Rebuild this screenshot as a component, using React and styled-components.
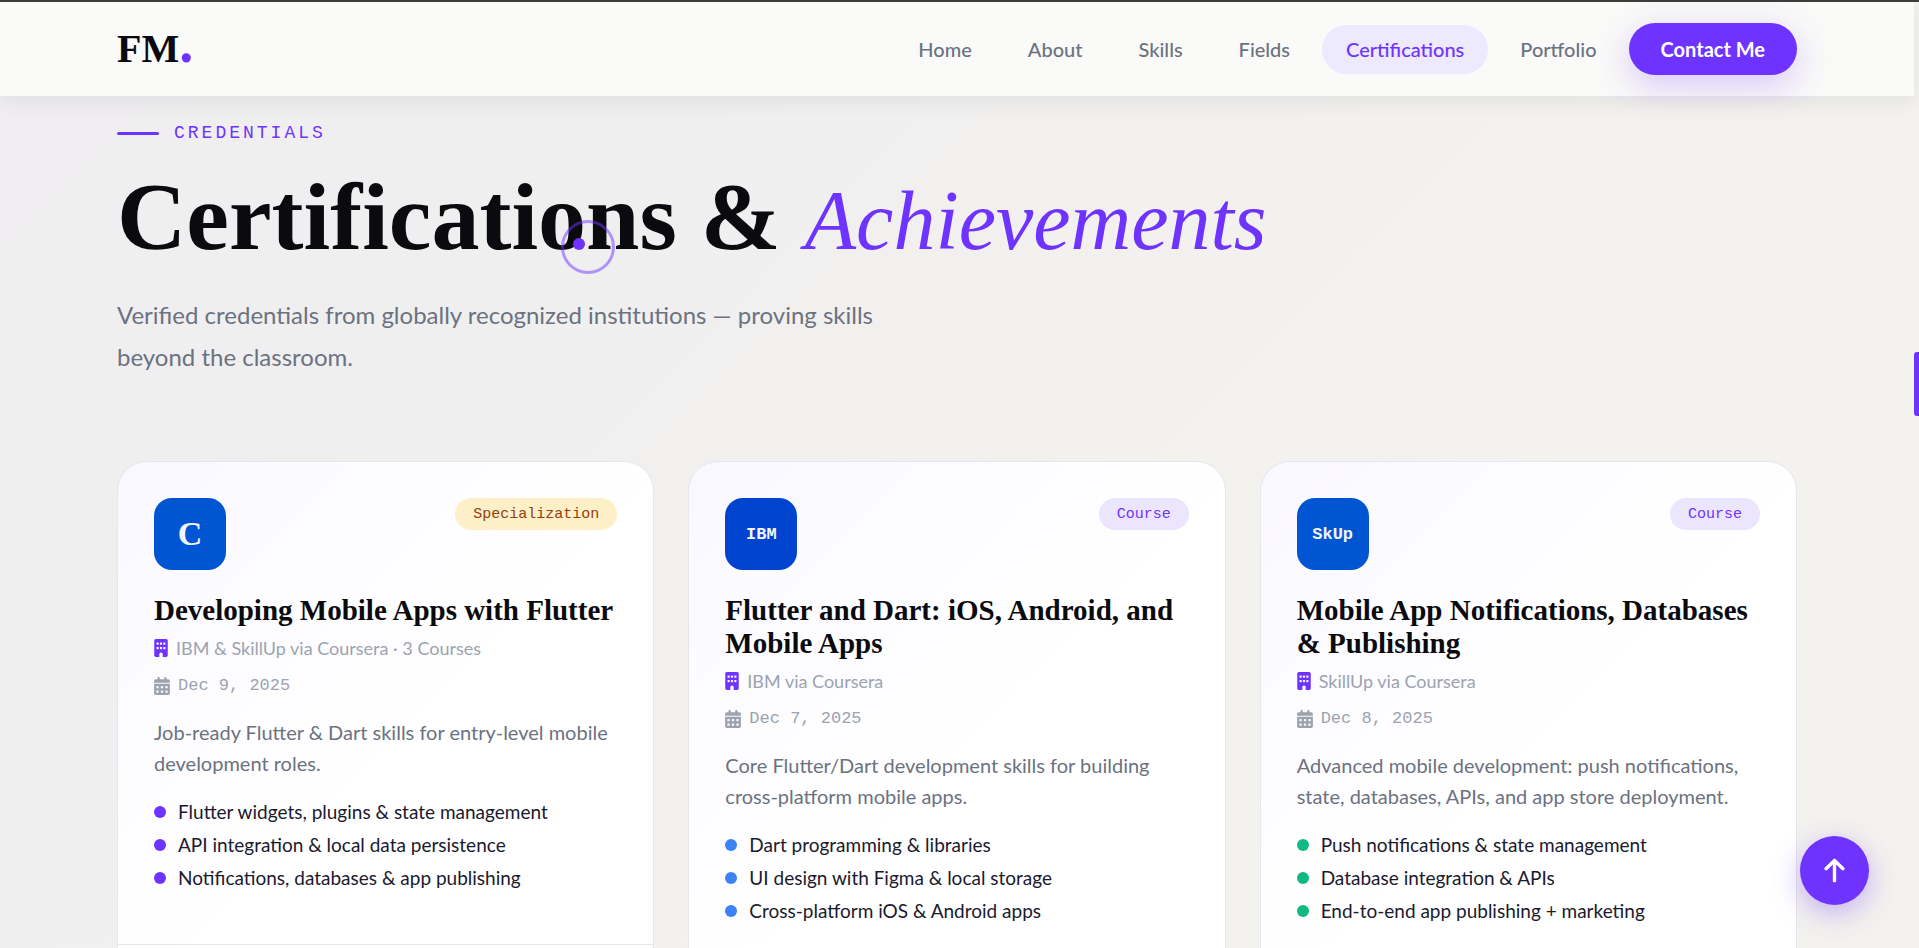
import React from 'react';
import styled, { createGlobalStyle } from 'styled-components';
import { FaArrowUp, FaBuilding, FaCalendarDays } from 'react-icons/fa6';

const sans = `Lato, 'Open Sans', sans-serif`;
const serif = `'Liberation Serif', serif`;
const mono = `'Liberation Mono', monospace`;

const GlobalStyle = createGlobalStyle`
  * {
    box-sizing: border-box;
    margin: 0;
    padding: 0;
  }

  body {
    height: 100vh;
    overflow: hidden;
    background: linear-gradient(135deg, #f0eef0 0%, #f0eff0 25%, #f3f2ee 65%, #f3f2ee 100%);
    font-family: ${sans};
    color: #0a0a0f;
  }
`;

const Header = styled.header`
  position: relative;
  z-index: 2;
  margin-right: 5px;
  border-bottom: 1px solid #e5e7eb;
  background: #fafaf8;
  box-shadow: 0 4px 20px rgba(0, 0, 0, 0.07);
`;

const TopEdge = styled.div`
  height: 2px;
  background: #403e3d;
`;

const Container = styled.div`
  max-width: 1760px;
  margin: 0 auto;
  padding: 0 40px;
`;

const HeaderRow = styled(Container)`
  display: flex;
  align-items: center;
  justify-content: space-between;
  height: 94px;
`;

const Logo = styled.a`
  font-family: ${serif};
  font-size: 40px;
  font-weight: 700;
  line-height: 46px;
  color: #0a0a0f;
  text-decoration: none;
`;

const LogoDot = styled.span`
  font-size: 56px;
  line-height: 0;
  color: #6e33ff;
`;

const Nav = styled.nav`
  display: flex;
  align-items: center;
  gap: 8px;
`;

const NavLink = styled.a`
  padding: 0 24px;
  border-radius: 25px;
  font-size: 20px;
  font-weight: 500;
  line-height: 49px;
  text-decoration: none;
  color: ${(props) => (props.$active ? '#6e33ff' : '#6b7280')};
  background: ${(props) => (props.$active ? '#ede9fe' : 'transparent')};
`;

const ContactButton = styled.button`
  padding: 0 32px;
  border: 0;
  border-radius: 26px;
  background: #6e33ff;
  box-shadow: 0 10px 36px rgba(110, 51, 255, 0.25);
  font-family: ${sans};
  font-size: 20px;
  font-weight: 700;
  line-height: 52px;
  color: #fff;
`;

const Section = styled.section`
  margin-right: 5px;
  padding-top: 23px;
`;

const Eyebrow = styled.p`
  display: flex;
  align-items: center;
  gap: 15px;
  margin-bottom: 18px;
  font-family: ${mono};
  font-size: 18px;
  line-height: 26px;
  letter-spacing: 3px;
  text-transform: uppercase;
  color: #6e33ff;

  &::before {
    content: '';
    width: 42px;
    height: 3px;
    border-radius: 2px;
    background: #6e33ff;
  }
`;

const Title = styled.h1`
  font-family: ${serif};
  font-size: 96px;
  font-weight: 700;
  line-height: 106px;
`;

const TitleAccent = styled.em`
  font-size: 84px;
  font-weight: 400;
  line-height: 1;
  color: #6e33ff;
`;

const Subtitle = styled.p`
  max-width: 780px;
  margin: 24px 0 83px;
  font-size: 24px;
  line-height: 42px;
  color: #6b7280;
`;

const CardGrid = styled.div`
  display: grid;
  grid-template-columns: repeat(3, 1fr);
  gap: 34px;
`;

const Card = styled.article`
  border: 1px solid #e5e7eb;
  border-radius: 30px;
  background: linear-gradient(135deg, #faf8ff 0%, #fff 50%);
`;

const CardBody = styled.div`
  padding: 36px;
`;

const CardTop = styled.div`
  display: flex;
  align-items: flex-start;
  justify-content: space-between;
  margin-bottom: 24px;
`;

const Issuer = styled.div`
  display: flex;
  align-items: center;
  justify-content: center;
  width: 72px;
  height: 72px;
  border-radius: 18px;
  background: ${(props) => props.$color};
  font-family: ${(props) => (props.$serif ? serif : mono)};
  font-size: ${(props) => (props.$serif ? 34 : 17)}px;
  font-weight: 700;
  color: #f2f5fd;
`;

const Badge = styled.span`
  padding: 2px 18px 0;
  border-radius: 16px;
  background: ${(props) => (props.$gold ? '#fdf0c8' : '#ebe6fe')};
  font-family: ${mono};
  font-size: 15px;
  font-weight: 500;
  line-height: 30px;
  color: ${(props) => (props.$gold ? '#92400e' : '#6e33ff')};
`;

const CardTitle = styled.h2`
  margin-bottom: 8px;
  font-family: ${serif};
  font-size: 29px;
  font-weight: 700;
  line-height: 33px;
`;

const MetaRow = styled.p`
  display: flex;
  align-items: center;
  gap: 8px;
  margin-bottom: 12px;
  font-size: 18px;
  line-height: 26px;
  color: #9ca3af;
`;

const DateRow = styled(MetaRow)`
  margin-bottom: 18px;
  font-family: ${mono};
  font-size: 17px;
`;

const BuildingIcon = styled(FaBuilding)`
  width: 14px;
  height: 18px;
  color: #6e33ff;
`;

const CalendarIcon = styled(FaCalendarDays)`
  width: 16px;
  height: 18px;
`;

const Description = styled.p`
  margin-bottom: 20px;
  font-size: 20px;
  line-height: 31px;
  color: #6b7280;
`;

const SkillList = styled.ul`
  display: flex;
  flex-direction: column;
  gap: 8px;
  margin-bottom: 18px;
  list-style: none;
`;

const Skill = styled.li`
  display: flex;
  align-items: center;
  gap: 12px;
  font-size: 19px;
  line-height: 25px;
  color: #1a1a2e;

  &::before {
    content: '';
    width: 12px;
    height: 12px;
    border-radius: 50%;
    background: ${(props) => props.$dot};
  }
`;

const CardFooter = styled.div`
  height: 80px;
  border-top: 1px solid #e5e7eb;
`;

const BackToTop = styled.button`
  position: fixed;
  right: 50px;
  bottom: 43px;
  display: flex;
  align-items: center;
  justify-content: center;
  width: 69px;
  height: 69px;
  border: 0;
  border-radius: 50%;
  background: #6e33ff;
  box-shadow: 0 8px 28px rgba(110, 51, 255, 0.35);
  font-size: 27px;
  color: #fff;
`;

const ScrollThumb = styled.div`
  position: fixed;
  top: 352px;
  right: 0;
  width: 5px;
  height: 64px;
  border-radius: 3px 0 0 3px;
  background: #6e33ff;
`;

const CursorRing = styled.div`
  position: fixed;
  top: 220px;
  left: 561px;
  z-index: 3;
  width: 54px;
  height: 54px;
  border: 3px solid rgba(110, 51, 255, 0.5);
  border-radius: 50%;
  pointer-events: none;
`;

const CursorDot = styled.div`
  position: fixed;
  top: 238px;
  left: 573px;
  z-index: 3;
  width: 12px;
  height: 12px;
  border-radius: 50%;
  background: #6e33ff;
  pointer-events: none;
`;

const links = ['Home', 'About', 'Skills', 'Fields', 'Certifications', 'Portfolio'];

const certificates = [
  {
    logo: 'C',
    serif: true,
    color: '#0056d2',
    badge: 'Specialization',
    gold: true,
    title: 'Developing Mobile Apps with Flutter',
    issuer: 'IBM & SkillUp via Coursera · 3 Courses',
    date: 'Dec 9, 2025',
    description: 'Job-ready Flutter & Dart skills for entry-level mobile development roles.',
    dot: '#6e33ff',
    skills: [
      'Flutter widgets, plugins & state management',
      'API integration & local data persistence',
      'Notifications, databases & app publishing',
    ],
  },
  {
    logo: 'IBM',
    color: '#0043ce',
    badge: 'Course',
    title: 'Flutter and Dart: iOS, Android, and Mobile Apps',
    issuer: 'IBM via Coursera',
    date: 'Dec 7, 2025',
    description: 'Core Flutter/Dart development skills for building cross-platform mobile apps.',
    dot: '#3b82f6',
    skills: [
      'Dart programming & libraries',
      'UI design with Figma & local storage',
      'Cross-platform iOS & Android apps',
    ],
  },
  {
    logo: 'SkUp',
    color: '#0056d2',
    badge: 'Course',
    title: 'Mobile App Notifications, Databases & Publishing',
    issuer: 'SkillUp via Coursera',
    date: 'Dec 8, 2025',
    description: 'Advanced mobile development: push notifications, state, databases, APIs, and app store deployment.',
    dot: '#10b981',
    skills: [
      'Push notifications & state management',
      'Database integration & APIs',
      'End-to-end app publishing + marketing',
    ],
  },
];

const CertificateCard = ({ cert }) => (
  <Card>
    <CardBody>
      <CardTop>
        <Issuer $color={cert.color} $serif={cert.serif}>{cert.logo}</Issuer>
        <Badge $gold={cert.gold}>{cert.badge}</Badge>
      </CardTop>
      <CardTitle>{cert.title}</CardTitle>
      <MetaRow>
        <BuildingIcon />
        {cert.issuer}
      </MetaRow>
      <DateRow>
        <CalendarIcon />
        {cert.date}
      </DateRow>
      <Description>{cert.description}</Description>
      <SkillList>
        {cert.skills.map((skill) => (
          <Skill key={skill} $dot={cert.dot}>{skill}</Skill>
        ))}
      </SkillList>
    </CardBody>
    <CardFooter />
  </Card>
);

const App = () => {
  return (
    <>
      <GlobalStyle />
      <TopEdge />
      <Header>
        <HeaderRow>
          <Logo href="#home">
            FM<LogoDot>.</LogoDot>
          </Logo>
          <Nav>
            {links.map((link) => (
              <NavLink key={link} href={`#${link.toLowerCase()}`} $active={link === 'Certifications'}>
                {link}
              </NavLink>
            ))}
            <ContactButton type="button">Contact Me</ContactButton>
          </Nav>
        </HeaderRow>
      </Header>
      <Section id="certifications">
        <Container>
          <Eyebrow>Credentials</Eyebrow>
          <Title>
            Certifications &amp; <TitleAccent>Achievements</TitleAccent>
          </Title>
          <Subtitle>
            Verified credentials from globally recognized institutions — proving skills beyond the classroom.
          </Subtitle>
          <CardGrid>
            {certificates.map((cert) => (
              <CertificateCard key={cert.title} cert={cert} />
            ))}
          </CardGrid>
        </Container>
      </Section>
      <BackToTop type="button" aria-label="Back to top">
        <FaArrowUp />
      </BackToTop>
      <ScrollThumb />
      <CursorRing />
      <CursorDot />
    </>
  );
};

export default App;
